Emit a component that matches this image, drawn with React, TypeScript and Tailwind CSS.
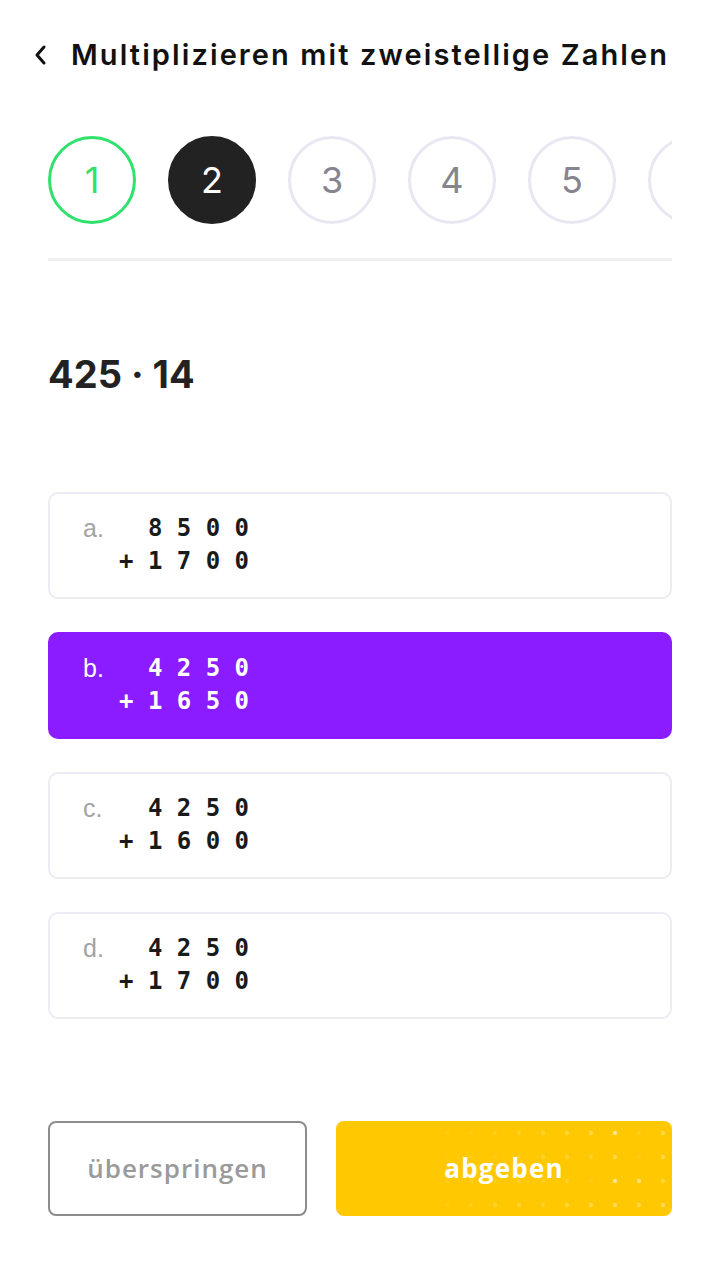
import React from 'react';

const steps = [1, 2, 3, 4, 5, 6];

const options = [
  { key: 'a.', top: '8 5 0 0', bottom: '+ 1 7 0 0' },
  { key: 'b.', top: '4 2 5 0', bottom: '+ 1 6 5 0', active: true },
  { key: 'c.', top: '4 2 5 0', bottom: '+ 1 6 0 0' },
  { key: 'd.', top: '4 2 5 0', bottom: '+ 1 7 0 0' },
];

// opacity of the decorative dots on the submit button, row by row
const dots = [
  [0.08, 0.1, 0.12, 0.15, 0.2, 0.25, 0.3, 0.55, 0.12, 0.3],
  [0.05, 0.08, 0.1, 0.12, 0.2, 0.2, 0.15, 0.3, 0.1, 0.3],
  [0.08, 0.12, 0.1, 0.15, 0.1, 0.15, 0.1, 0.55, 0.45, 0.25],
  [0.08, 0.12, 0.2, 0.22, 0.15, 0.25, 0.3, 0.35, 0.3, 0.35],
];

const StepCircle = ({ n }: { n: number }) => {
  let cls = 'border-[3px] border-[#e9e8f2] text-[#86858f]';
  if (n === 1) cls = 'border-[3px] border-[#2ee26b] text-[#2ee26b]';
  if (n === 2) cls = 'bg-[#222222] text-white border-[3px] border-[#222222]';
  return (
    <div className={`w-[88px] h-[88px] shrink-0 rounded-full flex items-center justify-center text-[36px] ${cls}`}>
      {n < 6 ? n : null}
    </div>
  );
};

const Option = ({ o }: { o: any }) => (
  <div
    className={`h-[107px] rounded-[10px] flex items-start pl-[33px] pt-[18px] ${
      o.active ? 'bg-[#8a1cff] border-2 border-[#8a1cff]' : 'bg-white border-2 border-[#ebecf4]'
    }`}
  >
    <span
      className={`text-[25px] leading-[33px] w-[36px] ${o.active ? 'text-white' : 'text-[#a3a3a3]'}`}
      style={{ fontFamily: '"Liberation Sans", Arial, sans-serif' }}
    >
      {o.key}
    </span>
    <div
      className={`font-bold text-[24px] leading-[33px] whitespace-pre text-right ${o.active ? 'text-white' : 'text-[#1a1a1a]'}`}
      style={{ fontFamily: '"DejaVu Sans Mono", monospace' }}
    >
      <div>{o.top}</div>
      <div>{o.bottom}</div>
    </div>
  </div>
);

export default function App() {
  return (
    <div className="w-[720px] h-[1275px] bg-white flex flex-col px-12" style={{ fontFamily: 'Inter, "Noto Sans", sans-serif' }}>
      <div className="flex items-center h-[50px] mt-[30px] -ml-[15px]">
        <svg width="16" height="22" viewBox="0 0 16 22" className="mr-[22px]">
          <path d="M11 3 L4 11 L11 19" fill="none" stroke="#111" strokeWidth="3" strokeLinecap="round" strokeLinejoin="round" />
        </svg>
        <h1 className="text-[29px] font-semibold text-[#111] tracking-[2.1px] whitespace-nowrap">Multiplizieren mit zweistellige Zahlen</h1>
      </div>

      <div className="mt-[56px] flex gap-8 overflow-hidden">
        {steps.map((n) => (
          <StepCircle key={n} n={n} />
        ))}
      </div>
      <div className="mt-[34px] h-[3px] bg-[#f0f0f3]" />

      <div className="mt-[94px] text-[38px] font-bold text-[#222] leading-none">425 · 14</div>

      <div className="mt-[99px] flex flex-col gap-[33px]">
        {options.map((o) => (
          <Option key={o.key} o={o} />
        ))}
      </div>

      <div className="mt-[102px] flex gap-[29px]">
        <button
          className="w-[259px] h-[95px] rounded-lg border-2 border-[#8c8c8c] text-[#9a9a9a] text-[26px] font-semibold tracking-[1px]"
          style={{ fontFamily: '"Open Sans", sans-serif' }}
        >
          überspringen
        </button>
        <button
          className="relative flex-1 h-[95px] rounded-lg bg-[#ffc800] text-white text-[26px] font-bold tracking-[1.2px] overflow-hidden"
          style={{ fontFamily: '"Open Sans", sans-serif' }}
        >
          <svg className="absolute left-0 top-0" width="336" height="95">
            {dots.map((row, r) =>
              row.map((op, c) => (
                <circle key={`${r}-${c}`} cx={111 + c * 24} cy={12 + r * 24} r="2.2" fill="#fff" opacity={op} />
              ))
            )}
          </svg>
          <span className="relative">abgeben</span>
        </button>
      </div>
    </div>
  );
}
